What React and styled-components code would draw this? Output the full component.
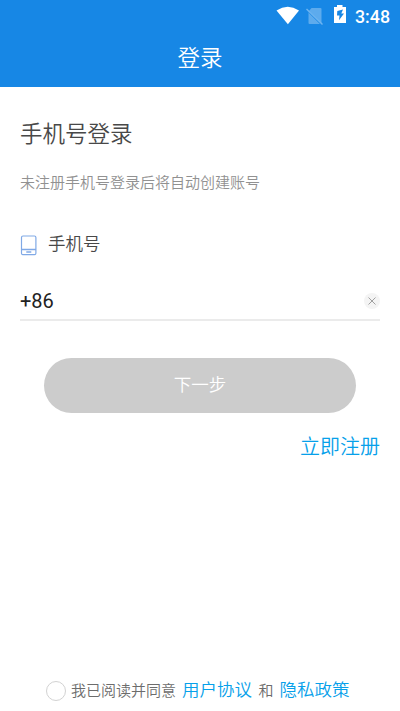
import React, { useState } from "react";
import styled, { createGlobalStyle } from "styled-components";

const GlobalStyle = createGlobalStyle`
  * {
    box-sizing: border-box;
  }
  body {
    margin: 0;
    background: #fff;
    font-family: "Noto Sans CJK SC", sans-serif;
    font-weight: 350;
  }
`;

const Page = styled.div`
  height: 711px;
  display: flex;
  flex-direction: column;
  overflow: hidden;
`;

const Header = styled.header`
  height: 87px;
  background: #1787e5;
  color: #fff;
`;

const StatusBar = styled.div`
  height: 30px;
  padding-right: 10px;
  display: flex;
  justify-content: flex-end;

  svg {
    display: block;
  }
`;

const Clock = styled.span`
  width: 35px;
  margin-left: 8px;
  font: 500 17.8px/34px Roboto, sans-serif;
`;

const Title = styled.h1`
  margin: 0;
  font-size: 22.5px;
  font-weight: inherit;
  line-height: 52px;
  text-align: center;
`;

const Content = styled.main`
  flex: 1;
  padding: 29px 20px 0;
  display: flex;
  flex-direction: column;
`;

const Heading = styled.h2`
  margin: 0;
  font-size: 22.5px;
  font-weight: inherit;
  line-height: 32px;
  color: #484848;
`;

const Hint = styled.p`
  margin: 23px 0 0;
  font-size: 15px;
  line-height: 22px;
  color: #919191;
`;

const Label = styled.div`
  margin-top: 37px;
  height: 26px;
  display: flex;
  gap: 11px;
  font-size: 17.5px;
  line-height: 26px;
  color: #484848;

  svg {
    margin-top: 5px;
  }
`;

const PhoneField = styled.div`
  margin-top: 26px;
  height: 39px;
  display: flex;
  justify-content: space-between;
  border-bottom: 2px solid #ebebeb;
`;

const PhoneInput = styled.input`
  flex: 1;
  min-width: 0;
  height: 37px;
  padding: 1px 0 0;
  border: none;
  outline: none;
  background: none;
  font: 400 20px/36px Roboto, sans-serif;
  color: #222;
`;

const ClearButton = styled.button`
  width: 16px;
  height: 16px;
  margin-top: 11px;
  padding: 0;
  border: none;
  background: none;

  svg {
    display: block;
  }
`;

const NextButton = styled.button`
  margin: 37px 23.7px 0;
  height: 55px;
  padding: 0 0 5px;
  border: none;
  border-radius: 28px;
  background: #ccc;
  color: #fff;
  font: inherit;
  font-size: 17.5px;
`;

const RegisterLink = styled.a`
  margin-top: 18px;
  align-self: flex-end;
  font-size: 20px;
  line-height: 30px;
  color: #06a0ea;
`;

const Agreement = styled.footer`
  height: 42px;
  padding-left: 46px;
  display: flex;
  align-items: baseline;
  font-size: 15px;
  line-height: 40px;
  color: #6c6c6c;
  white-space: nowrap;
`;

const Radio = styled.span`
  align-self: flex-start;
  width: 20px;
  height: 20px;
  margin: 12px 5px 0 0;
  border: 1px solid #d2d2d2;
  border-radius: 50%;
`;

const PolicyLink = styled.a`
  margin: 0 6.5px 0 6px;
  font-size: 17.5px;
  color: #06a0ea;
`;

const StatusIcons = () => (
  <svg width="74" height="30" viewBox="0 0 74 30">
    <path d="M3.500 10.400Q14.700 3.200 26 10.400L14.900 24.200Z" fill="#fff" />
    <path d="M38.500 8H47.500Q48.500 8 48.500 9V23Q48.500 24 47.500 24H36.500Q35.500 24 35.500 23V11.500Z" fill="#5dabed" />
    <path d="M34.500 10.500L49 25" stroke="#1787e5" strokeWidth="1.500" />
    <path d="M33.500 9L49.500 24.500" stroke="#6db4f0" strokeWidth="1.500" />
    <path d="M64 5H69.500V7H73V23H61V7H64Z" fill="#fff" />
    <path d="M70 9.500L64.300 11L64 15.500H66.500L66 20.300L71 13.600H68.300Z" fill="#1787e5" />
  </svg>
);

const PhoneIcon = () => (
  <svg width="17" height="21" viewBox="0 0 17 21" fill="none" stroke="#80a9e6">
    <rect x="1.500" y="1" width="14.400" height="18.700" rx="1.500" strokeWidth="1.200" />
    <path d="M1.500 14.500H16M6.300 17H11.300" strokeWidth="1.300" />
  </svg>
);

const ClearIcon = () => (
  <svg width="16" height="16" viewBox="0 0 16 16">
    <circle cx="8" cy="8" r="8" fill="#f4f4f4" />
    <path d="M4.500 4.500L11.500 11.500M11.500 4.500L4.500 11.500" stroke="#a0a0a0" strokeWidth="1" />
  </svg>
);

const App = () => {
  const [phone, setPhone] = useState("+86");

  return (
    <Page>
      <GlobalStyle />
      <Header>
        <StatusBar>
          <StatusIcons />
          <Clock>3:48</Clock>
        </StatusBar>
        <Title>登录</Title>
      </Header>

      <Content>
        <Heading>手机号登录</Heading>
        <Hint>未注册手机号登录后将自动创建账号</Hint>
        <Label>
          <PhoneIcon />
          手机号
        </Label>
        <PhoneField>
          <PhoneInput value={phone} onChange={(e) => setPhone(e.target.value)} />
          <ClearButton onClick={() => setPhone("")}>
            <ClearIcon />
          </ClearButton>
        </PhoneField>
        <NextButton>下一步</NextButton>
        <RegisterLink>立即注册</RegisterLink>
      </Content>

      <Agreement>
        <Radio />
        我已阅读并同意
        <PolicyLink>用户协议</PolicyLink>
        和
        <PolicyLink>隐私政策</PolicyLink>
      </Agreement>
    </Page>
  );
};

export default App;
